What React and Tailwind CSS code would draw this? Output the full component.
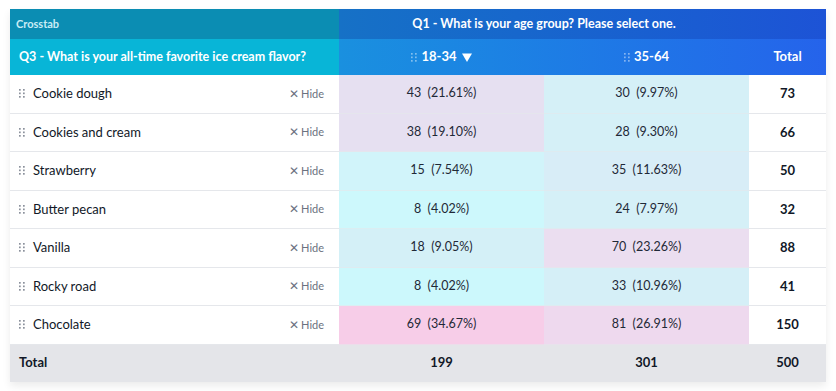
import React from "react";

const rows = [
  { name: "Cookie dough", a: "43  (21.61%)", b: "30  (9.97%)", total: 73, ca: "bg-[#e6e0f1]", cb: "bg-[#d5f0f7]" },
  { name: "Cookies and cream", a: "38  (19.10%)", b: "28  (9.30%)", total: 66, ca: "bg-[#e6e0f1]", cb: "bg-[#d5f0f7]" },
  { name: "Strawberry", a: "15  (7.54%)", b: "35  (11.63%)", total: 50, ca: "bg-[#d1f4fa]", cb: "bg-[#d8edf7]" },
  { name: "Butter pecan", a: "8  (4.02%)", b: "24  (7.97%)", total: 32, ca: "bg-[#cdf8fc]", cb: "bg-[#d5f0f7]" },
  { name: "Vanilla", a: "18  (9.05%)", b: "70  (23.26%)", total: 88, ca: "bg-[#d4f0f7]", cb: "bg-[#ebdef0]" },
  { name: "Rocky road", a: "8  (4.02%)", b: "33  (10.96%)", total: 41, ca: "bg-[#ccf8fc]", cb: "bg-[#d5eff7]" },
  { name: "Chocolate", a: "69  (34.67%)", b: "81  (26.91%)", total: 150, ca: "bg-[#f7cde8]", cb: "bg-[#eed9ee]" },
];

function Grip({ light }) {
  const c = light ? "rgba(255,255,255,0.45)" : "#8b919c";
  return (
    <svg width="6" height="9" viewBox="0 0 6 9" className="shrink-0">
      {[0, 3.5, 7].map((y) =>
        [0, 4].map((x) => <rect key={x + "-" + y} x={x} y={y} width="1.7" height="1.7" fill={c} />)
      )}
    </svg>
  );
}

export default function App() {
  return (
    <div className="min-h-[391px] bg-white px-[10px] pt-[9px] text-[13px] text-[#111827]" style={{ fontFamily: "Lato, 'Open Sans', sans-serif" }}>
      <div className="w-[816px] shadow-[0_4px_8px_rgba(0,0,0,0.08)]">
        {/* header row 1 */}
        <div className="grid h-[30px] grid-cols-[329px_487px]">
          <div className="flex items-center bg-[#0b8db3] px-[6px] text-[11px] font-bold text-[#c9ecf5]">Crosstab</div>
          <div className="flex items-center bg-gradient-to-r from-[#1671c6] to-[#1d53d6]">
            <div className="w-[410px] text-center text-[12.5px] font-bold text-white">Q1 - What is your age group? Please select one.</div>
          </div>
        </div>
        {/* header row 2 */}
        <div className="grid h-[36px] grid-cols-[329px_487px]">
          <div className="flex items-center bg-[#08b5d7] px-[9px] text-[12.5px] font-bold text-white">
            Q3 - What is your all-time favorite ice cream flavor?
          </div>
          <div className="grid grid-cols-[205px_205px_77px] bg-gradient-to-r from-[#1a90df] to-[#2563eb] font-bold text-white">
            <div className="flex items-center justify-center gap-[4px]">
              <Grip light />
              <span>18-34</span>
              <svg width="10" height="9" viewBox="0 0 10 9" className="ml-[1px]">
                <path d="M0 0.5 L10 0.5 L5 9 Z" fill="white" />
              </svg>
            </div>
            <div className="flex items-center justify-center gap-[4px]">
              <Grip light />
              <span>35-64</span>
            </div>
            <div className="flex items-center justify-center">Total</div>
          </div>
        </div>
        {/* body */}
        {rows.map((r) => (
          <div key={r.name} className="grid h-[38.5px] grid-cols-[329px_205px_205px_77px]">
            <div className="flex items-center border-b border-[#e5e7eb] bg-white pl-[9px] pr-[15px]">
              <Grip />
              <span className="ml-[8px] flex-1">{r.name}</span>
              <span className="flex items-center gap-[2px] text-[11px] text-[#6b7280]">
                <span className="text-[12px]">✕</span>Hide
              </span>
            </div>
            <div className={`flex items-center justify-center whitespace-pre border-b border-[#e5e7eb]/60 text-[12.5px] text-[#1f2937] ${r.ca}`}>{r.a}</div>
            <div className={`flex items-center justify-center whitespace-pre border-b border-[#e5e7eb]/60 text-[12.5px] text-[#1f2937] ${r.cb}`}>{r.b}</div>
            <div className="flex items-center justify-center border-b border-[#e5e7eb] bg-white font-bold">{r.total}</div>
          </div>
        ))}
        {/* total row */}
        <div className="grid h-[37px] grid-cols-[329px_205px_205px_77px] bg-[#e4e5e9] font-bold">
          <div className="flex items-center pl-[9px]">Total</div>
          <div className="flex items-center justify-center">199</div>
          <div className="flex items-center justify-center">301</div>
          <div className="flex items-center justify-center">500</div>
        </div>
      </div>
    </div>
  );
}
